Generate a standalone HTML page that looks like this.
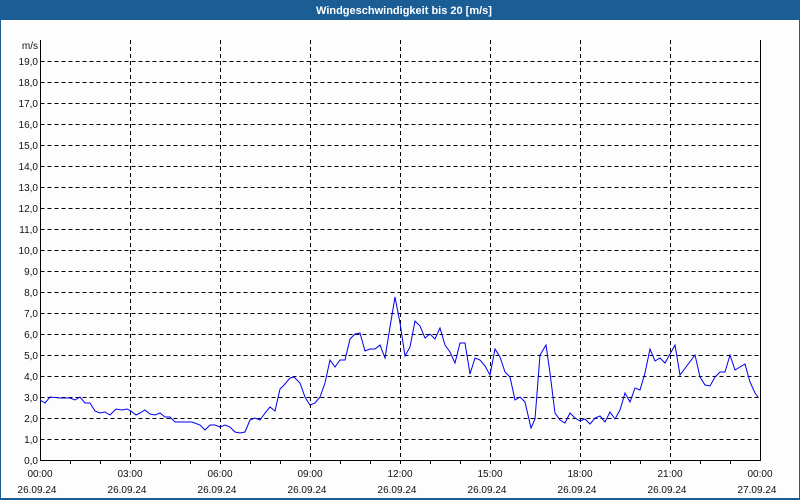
<!DOCTYPE html>
<html><head><meta charset="utf-8"><style>
html,body{margin:0;padding:0;width:800px;height:500px;overflow:hidden;background:#fff}
</style></head><body>
<svg width="800" height="500" xmlns="http://www.w3.org/2000/svg" font-family="Liberation Sans, DejaVu Sans, sans-serif">
<rect x="0" y="0" width="800" height="500" fill="#1b5e95"/>
<rect x="1" y="20" width="798" height="478" fill="#fcfdfc"/>
<text x="404" y="14" fill="#fff" font-size="11" font-weight="bold" text-anchor="middle">Windgeschwindigkeit bis 20 [m/s]</text>
<g stroke="#000" stroke-width="1" stroke-dasharray="4,3" shape-rendering="crispEdges">
<path d="M40.5 61.5H760M40.5 82.5H760M40.5 103.5H760M40.5 124.5H760M40.5 145.5H760M40.5 166.5H760M40.5 187.5H760M40.5 208.5H760M40.5 229.5H760M40.5 250.5H760M40.5 271.5H760M40.5 292.5H760M40.5 313.5H760M40.5 334.5H760M40.5 355.5H760M40.5 376.5H760M40.5 397.5H760M40.5 418.5H760M40.5 439.5H760"/>
<path d="M130.5 40V460M220.5 40V460M310.5 40V460M400.5 40V460M490.5 40V460M580.5 40V460M670.5 40V460"/>
</g>
<g stroke="#000" stroke-width="1" fill="none" shape-rendering="crispEdges">
<path d="M40.5 40V460.5H760.5V40"/>
<path d="M70.5 460v4M100.5 460v4M130.5 460v4M160.5 460v4M190.5 460v4M220.5 460v4M250.5 460v4M280.5 460v4M310.5 460v4M340.5 460v4M370.5 460v4M400.5 460v4M430.5 460v4M460.5 460v4M490.5 460v4M520.5 460v4M550.5 460v4M580.5 460v4M610.5 460v4M640.5 460v4M670.5 460v4M700.5 460v4M730.5 460v4"/>
</g>
<polyline fill="none" stroke="#0000ee" stroke-width="1" points="40,400 45,403 50,397 60,398 70,398 75,400 80,397 85,403 90,403 95,411 100,413 105,412 110,415 116,409 122,410 127,409 131,411 136,415 140,413 145,410 150,414 155,415 160,413 165,417 170,417 175,422 192,422 200,425 205,430 210,425 215,425 220,427 225,425 230,427 235,432 240,433 245,432 250,420 255,418 260,420 265,413 270,407 275,411 280,389 285,384 290,378 294,377 300,383 305,397 310,405 315,403 320,397 325,383 330,360 335,367 340,360 345,360 350,339 355,334 360,333 365,351 370,349 375,349 380,345 385,358 390,327 395,297 400,323 405,356 410,347 415,321 420,326 425,338 430,334 435,339 440,328 445,345 450,352 455,363 460,343 465,343 470,374 475,358 480,360 485,366 490,375 495,349 500,357 505,372 510,377 515,400 520,397 525,402 531,428 535,419 540,355 546,345 550,373 555,413 560,420 565,423 570,413 575,418 580,421 585,419 590,424 595,418 600,416 605,422 610,412 615,419 620,410 625,393 630,402 635,388 640,390 645,373 650,349 655,361 660,358 665,363 675,345 680,375 695,355 700,377 705,385 710,386 715,377 720,372 725,372 730,355 735,370 745,364 750,382 755,393 758,397"/>
<g font-size="10" fill="#111" text-anchor="end">
<text x="38" y="49">m/s</text>
<text x="38" y="65">19,0</text><text x="38" y="86">18,0</text><text x="38" y="107">17,0</text><text x="38" y="128">16,0</text><text x="38" y="149">15,0</text><text x="38" y="170">14,0</text><text x="38" y="191">13,0</text><text x="38" y="212">12,0</text><text x="38" y="233">11,0</text><text x="38" y="254">10,0</text><text x="38" y="275">9,0</text><text x="38" y="296">8,0</text><text x="38" y="317">7,0</text><text x="38" y="338">6,0</text><text x="38" y="359">5,0</text><text x="38" y="380">4,0</text><text x="38" y="401">3,0</text><text x="38" y="422">2,0</text><text x="38" y="443">1,0</text><text x="38" y="464">0,0</text>
</g>
<g font-size="10" fill="#111" text-anchor="middle">
<text x="40" y="477">00:00</text><text x="130" y="477">03:00</text><text x="220" y="477">06:00</text><text x="310" y="477">09:00</text><text x="400" y="477">12:00</text><text x="490" y="477">15:00</text><text x="580" y="477">18:00</text><text x="670" y="477">21:00</text><text x="760" y="477">00:00</text>
<text x="37" y="493">26.09.24</text><text x="127" y="493">26.09.24</text><text x="217" y="493">26.09.24</text><text x="307" y="493">26.09.24</text><text x="397" y="493">26.09.24</text><text x="487" y="493">26.09.24</text><text x="577" y="493">26.09.24</text><text x="667" y="493">26.09.24</text><text x="757" y="493">27.09.24</text>
</g>
</svg>
</body></html>
